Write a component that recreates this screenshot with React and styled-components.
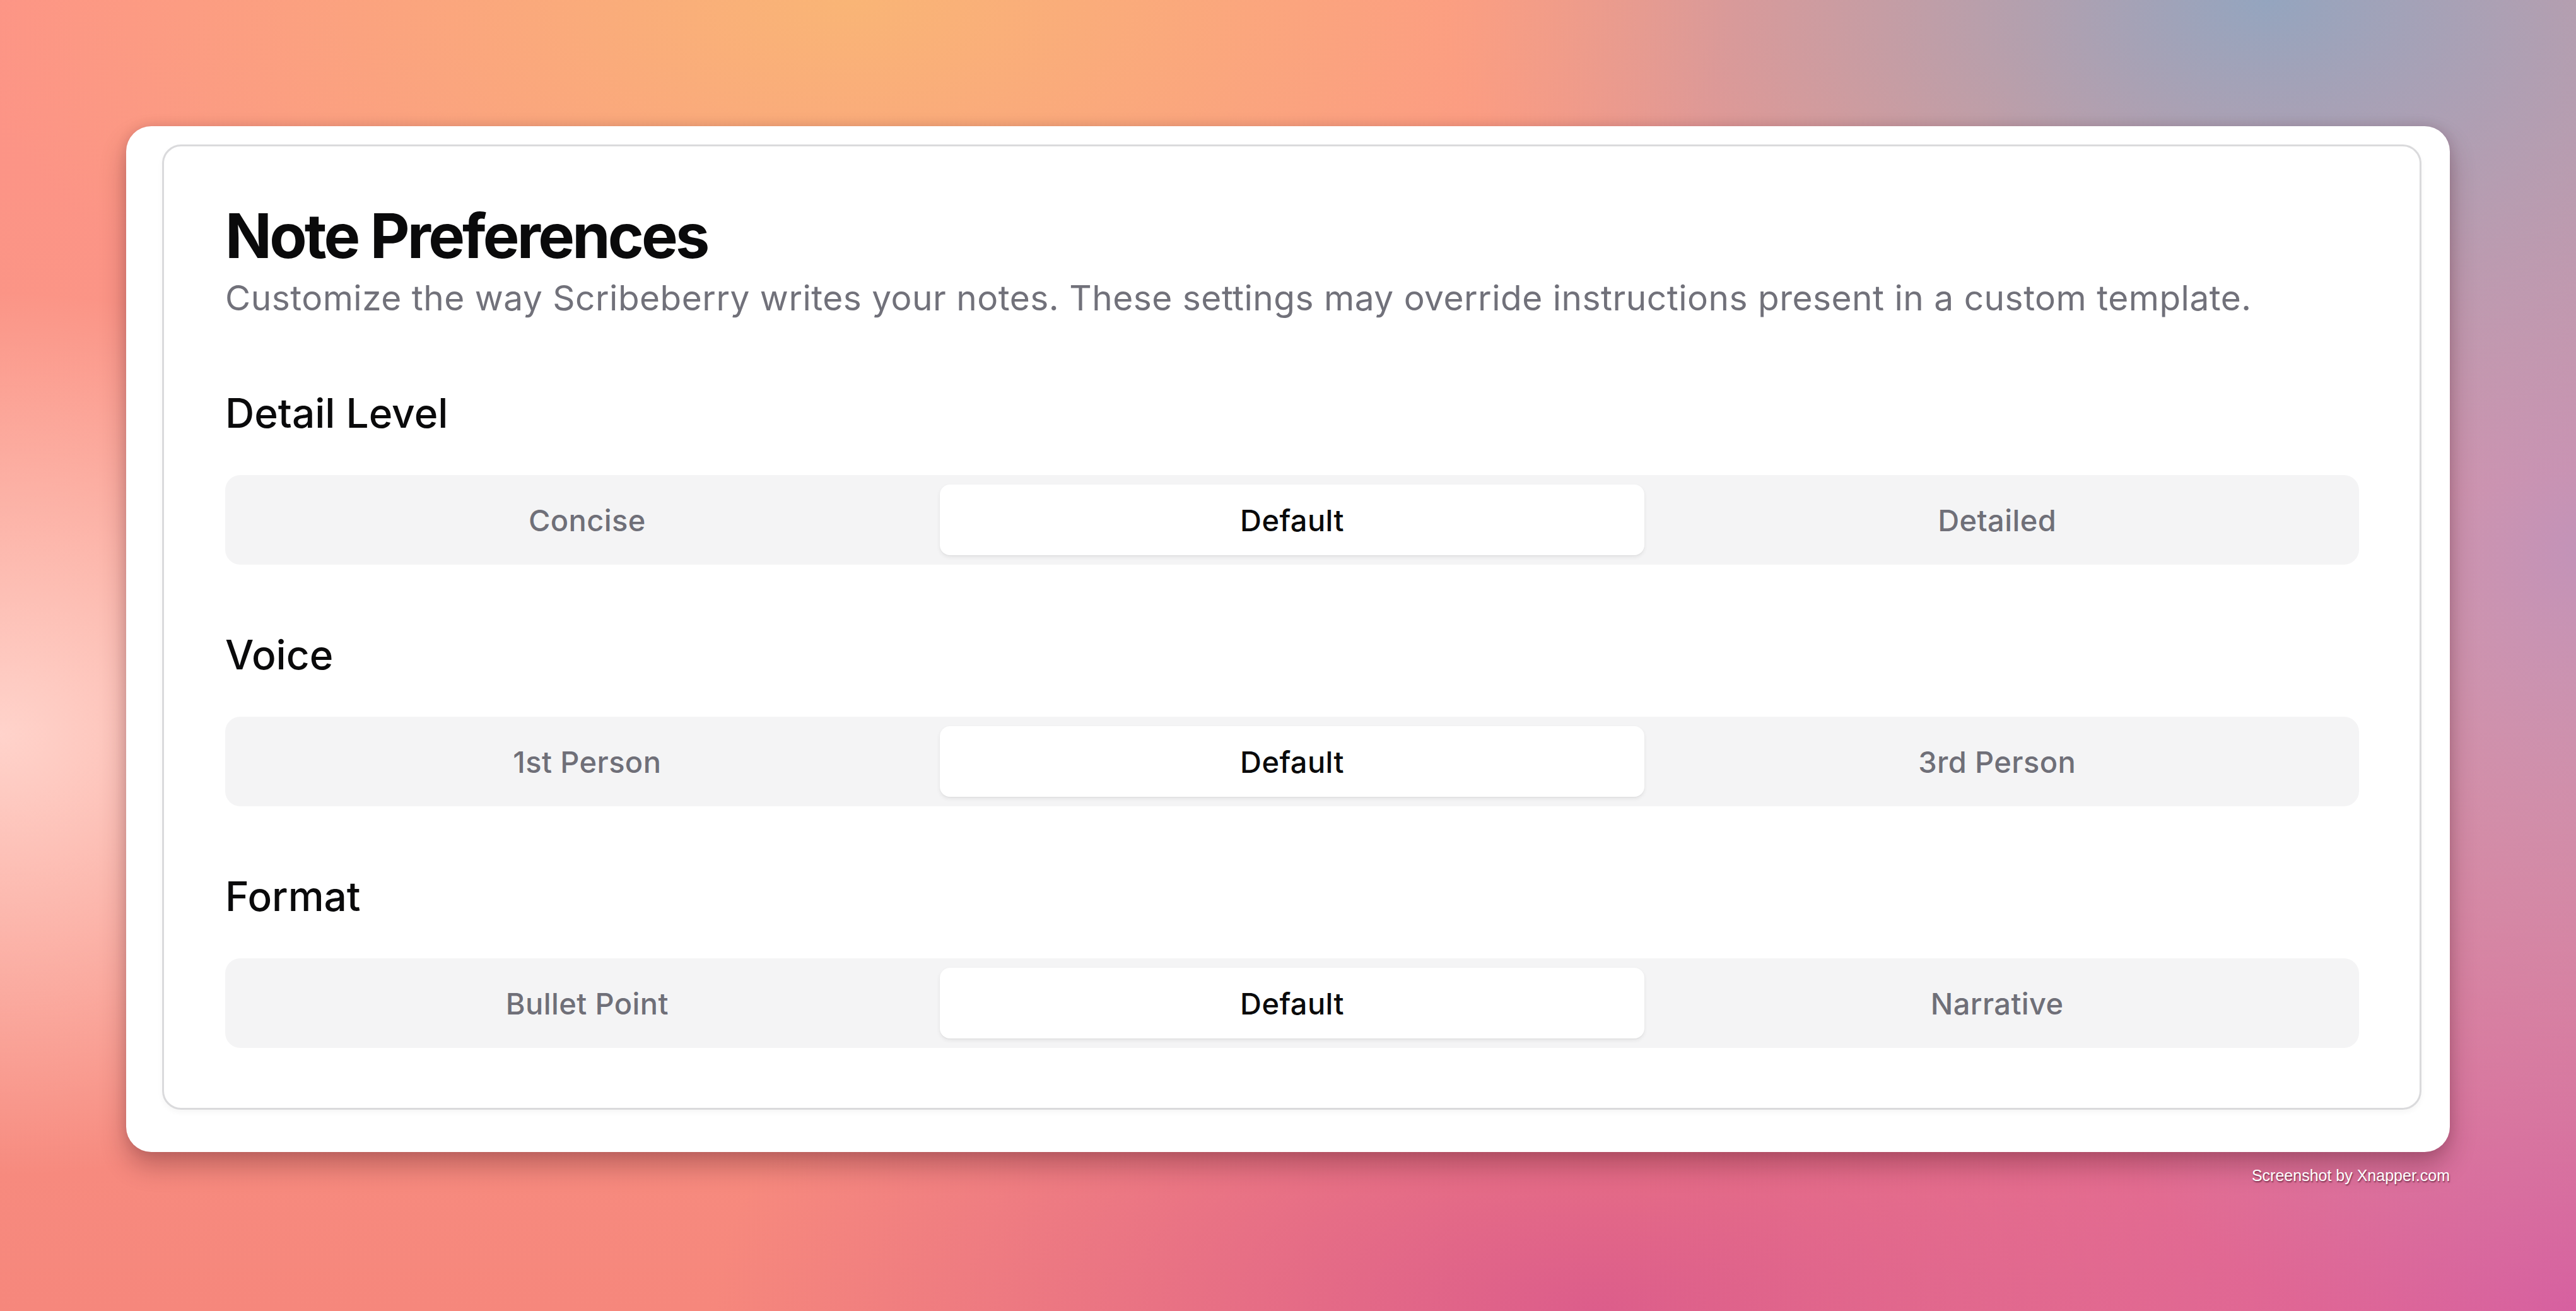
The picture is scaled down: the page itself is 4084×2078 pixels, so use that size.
import React, { useState } from "react";
import styled, { createGlobalStyle } from "styled-components";

const GlobalStyle = createGlobalStyle`
  html, body {
    margin: 0;
    padding: 0;
  }
  body {
    font-family: Inter, "Noto Sans", "Liberation Sans", sans-serif;
    -webkit-font-smoothing: antialiased;
  }
`;

const Backdrop = styled.main`
  width: 4084px;
  height: 2078px;
  box-sizing: border-box;
  padding: 200px 200px 0 200px;
  overflow: hidden;
  background-color: #f0868a;
  background-image:
    radial-gradient(ellipse 900px 700px at 0% 56%, #ffd3cb 0%, rgba(255, 211, 203, 0) 100%),
    radial-gradient(ellipse 1400px 700px at 33% 0%, #f9b576 0%, rgba(249, 181, 118, 0) 100%),
    radial-gradient(ellipse 1300px 800px at 88% 0%, #94a5bf 0%, rgba(148, 165, 191, 0) 100%),
    radial-gradient(ellipse 1100px 1300px at 100% 42%, #c393b8 0%, rgba(195, 147, 184, 0) 100%),
    radial-gradient(ellipse 1500px 1100px at 100% 100%, #d85c9e 0%, rgba(216, 92, 158, 0) 100%),
    radial-gradient(ellipse 1400px 700px at 62% 100%, #dc5d8b 0%, rgba(220, 93, 139, 0) 100%),
    linear-gradient(180deg, #fd9486 0%, #f99586 50%, #f6877c 100%);
`;

const Frame = styled.div`
  background: #ffffff;
  border-radius: 40px;
  padding: 29px 45px 67px 57px;
  box-shadow: 0 22px 40px rgba(70, 20, 30, 0.32), 0 0 18px rgba(60, 20, 30, 0.12);
`;

const Card = styled.section`
  border: 3px solid #dadadc;
  border-radius: 30px;
  padding: 84px 96px 95px 97px;
  box-shadow: 0 4px 10px rgba(0, 0, 0, 0.04);
  display: flex;
  flex-direction: column;
  gap: 103px;
`;

const Header = styled.header`
  display: flex;
  flex-direction: column;
`;

const Title = styled.h1`
  margin: 0;
  font-size: 97px;
  line-height: 116px;
  font-weight: 700;
  letter-spacing: -3.8px;
  color: #0a0a0b;
`;

const Subtitle = styled.p`
  margin: 0;
  font-size: 55px;
  line-height: 80px;
  font-weight: 400;
  letter-spacing: 0.5px;
  color: #71717a;
`;

const Group = styled.div`
  display: flex;
  flex-direction: column;
  gap: 58px;
`;

const GroupLabel = styled.h2`
  margin: 0;
  font-size: 64px;
  line-height: 80px;
  font-weight: 500;
  color: #0a0a0b;
`;

const Segmented = styled.div`
  display: grid;
  grid-template-columns: repeat(3, 1fr);
  height: 142px;
  box-sizing: border-box;
  padding: 15px;
  background: #f4f4f5;
  border-radius: 24px;
`;

const Option = styled.button`
  border: 0;
  margin: 0;
  font-family: inherit;
  font-size: 47px;
  font-weight: 500;
  letter-spacing: 0.4px;
  border-radius: 16px;
  cursor: pointer;
  background: ${(p) => (p.$active ? "#ffffff" : "transparent")};
  color: ${(p) => (p.$active ? "#0a0a0b" : "#6f6f78")};
  box-shadow: ${(p) =>
    p.$active ? "0 3px 6px rgba(0, 0, 0, 0.07), 0 1px 2px rgba(0, 0, 0, 0.04)" : "none"};
`;

const Credit = styled.div`
  margin-top: 22px;
  text-align: right;
  font-family: "Liberation Sans", Arial, sans-serif;
  font-size: 25px;
  line-height: 30px;
  color: #ffffff;
  text-shadow: 1px 2px 2px rgba(60, 10, 30, 0.6);
`;

const groups = [
  { label: "Detail Level", options: ["Concise", "Default", "Detailed"] },
  { label: "Voice", options: ["1st Person", "Default", "3rd Person"] },
  { label: "Format", options: ["Bullet Point", "Default", "Narrative"] },
];

const PreferenceGroup = ({ label, options }) => {
  const [value, setValue] = useState("Default");
  return (
    <Group>
      <GroupLabel>{label}</GroupLabel>
      <Segmented role="tablist">
        {options.map((opt) => (
          <Option key={opt} $active={opt === value} onClick={() => setValue(opt)}>
            {opt}
          </Option>
        ))}
      </Segmented>
    </Group>
  );
};

export default function App() {
  return (
    <Backdrop>
      <GlobalStyle />
      <Frame>
        <Card>
          <Header>
            <Title>Note Preferences</Title>
            <Subtitle>
              Customize the way Scribeberry writes your notes. These settings may override
              instructions present in a custom template.
            </Subtitle>
          </Header>
          {groups.map((g) => (
            <PreferenceGroup key={g.label} label={g.label} options={g.options} />
          ))}
        </Card>
      </Frame>
      <Credit>Screenshot by Xnapper.com</Credit>
    </Backdrop>
  );
}
